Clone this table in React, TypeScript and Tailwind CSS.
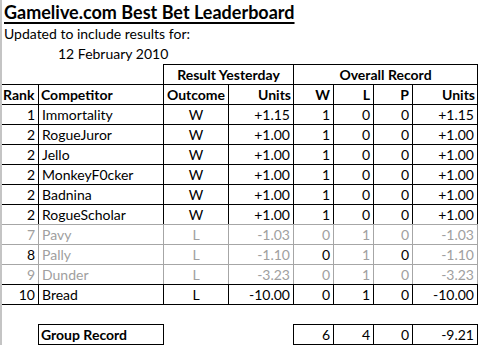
import React from "react";

type Row = {
  rank: string;
  name: string;
  out: string;
  u1: string;
  w: string;
  l: string;
  p: string;
  u2: string;
  gray?: boolean;
  grayBottom?: boolean;
};

const rows: Row[] = [
  { rank: "1", name: "Immortality", out: "W", u1: "+1.15", w: "1", l: "0", p: "0", u2: "+1.15" },
  { rank: "2", name: "RogueJuror", out: "W", u1: "+1.00", w: "1", l: "0", p: "0", u2: "+1.00" },
  { rank: "2", name: "Jello", out: "W", u1: "+1.00", w: "1", l: "0", p: "0", u2: "+1.00" },
  { rank: "2", name: "MonkeyF0cker", out: "W", u1: "+1.00", w: "1", l: "0", p: "0", u2: "+1.00" },
  { rank: "2", name: "Badnina", out: "W", u1: "+1.00", w: "1", l: "0", p: "0", u2: "+1.00" },
  { rank: "2", name: "RogueScholar", out: "W", u1: "+1.00", w: "1", l: "0", p: "0", u2: "+1.00", grayBottom: true },
  { rank: "7", name: "Pavy", out: "L", u1: "-1.03", w: "0", l: "1", p: "0", u2: "-1.03", gray: true, grayBottom: true },
  { rank: "8", name: "Pally", out: "L", u1: "-1.10", w: "0", l: "1", p: "0", u2: "-1.10", gray: true, grayBottom: true },
  { rank: "9", name: "Dunder", out: "L", u1: "-3.23", w: "0", l: "1", p: "0", u2: "-3.23", gray: true },
  { rank: "10", name: "Bread", out: "L", u1: "-10.00", w: "0", l: "1", p: "0", u2: "-10.00" },
];

export default function App() {
  return (
    <div
      className="w-[478px] h-[345px] overflow-hidden bg-white text-black border-l-2 border-[#c4c4c4]"
      style={{ fontFamily: "Lato, 'Noto Sans', sans-serif" }}
    >
      {/* Title */}
      <div className="h-[24px] pl-[2px] pt-[2px] text-[18px] leading-[20px] font-bold underline underline-offset-[3px] decoration-[1.5px] whitespace-nowrap">
        Gamelive.com Best Bet Leaderboard
      </div>
      <div className="h-[20px] pl-[2px] text-[14px] leading-[19px] whitespace-nowrap">
        Updated to include results for:
      </div>
      <div className="h-[20px] pl-[56px] text-[14px] leading-[19px] whitespace-nowrap">
        12 February 2010
      </div>

      {/* Header row 1 */}
      <div className="flex h-[21px] text-[14px] font-bold">
        <div className="w-[161px] border-b border-black" />
        <div className="w-[315px] flex border border-black">
          <div className="w-[130px] border-r border-black text-center leading-[19px]">Result Yesterday</div>
          <div className="w-[183px] text-center leading-[19px]">Overall Record</div>
        </div>
      </div>

      {/* Header row 2 */}
      <div className="flex h-[20px] border-b border-black text-[14px] font-bold leading-[19px]">
        <div className="w-[37px] border-r border-black pl-[1px]">Rank</div>
        <div className="w-[125px] border-r border-black pl-[2px]">Competitor</div>
        <div className="w-[65px] border-r border-black text-center">Outcome</div>
        <div className="w-[65px] border-r border-black text-right pr-[2px]">Units</div>
        <div className="w-[40px] border-r border-black text-right pr-[3px]">W</div>
        <div className="w-[40px] border-r border-black text-right pr-[3px]">L</div>
        <div className="w-[39px] border-r border-black text-right pr-[3px]">P</div>
        <div className="w-[65px] border-r border-black text-right pr-[2px]">Units</div>
      </div>

      {/* Data rows */}
      {rows.map((r, i) => {
        const v = r.gray ? "border-[#a6a6a6]" : "border-black";
        const b = r.grayBottom ? "border-[#a6a6a6]" : "border-black";
        const t = r.gray ? "text-[#a0a0a0]" : "text-black";
        const isPally = r.name === "Pally";
        return (
          <div key={i} className={`flex h-[20px] border-b ${b} text-[14px] leading-[19px] ${t}`}>
            <div className={`w-[37px] border-r ${v} text-right pr-[3px] ${isPally ? "text-black" : ""}`}>{r.rank}</div>
            <div className={`w-[125px] border-r ${v} pl-[3px] whitespace-nowrap`}>{r.name}</div>
            <div className={`w-[65px] border-r ${v} text-center`}>{r.out}</div>
            <div className={`w-[65px] border-r ${v} text-right pr-[3px]`}>{r.u1}</div>
            <div className={`w-[40px] border-r ${v} text-right pr-[3px] ${isPally ? "text-black" : ""}`}>{r.w}</div>
            <div className={`w-[40px] border-r ${v} text-right pr-[3px]`}>{r.l}</div>
            <div className={`w-[39px] border-r ${v} text-right pr-[3px] ${isPally ? "text-black" : ""}`}>{r.p}</div>
            <div className={`w-[65px] border-r ${v} text-right pr-[3px]`}>{r.u2}</div>
          </div>
        );
      })}

      {/* Spacer row */}
      <div className="h-[19px]" />

      {/* Group record */}
      <div className="flex h-[21px] text-[14px] leading-[19px]">
        <div className="w-[36px]" />
        <div className="w-[126px] border border-black font-bold pl-[2px]">Group Record</div>
        <div className="w-[129px]" />
        <div className="w-[185px] flex border-l border-t border-b border-black">
          <div className="w-[40px] border-r border-black text-right pr-[3px]">6</div>
          <div className="w-[40px] border-r border-black text-right pr-[3px]">4</div>
          <div className="w-[39px] border-r border-black text-right pr-[3px]">0</div>
          <div className="w-[65px] border-r border-black text-right pr-[3px]">-9.21</div>
        </div>
      </div>
    </div>
  );
}
